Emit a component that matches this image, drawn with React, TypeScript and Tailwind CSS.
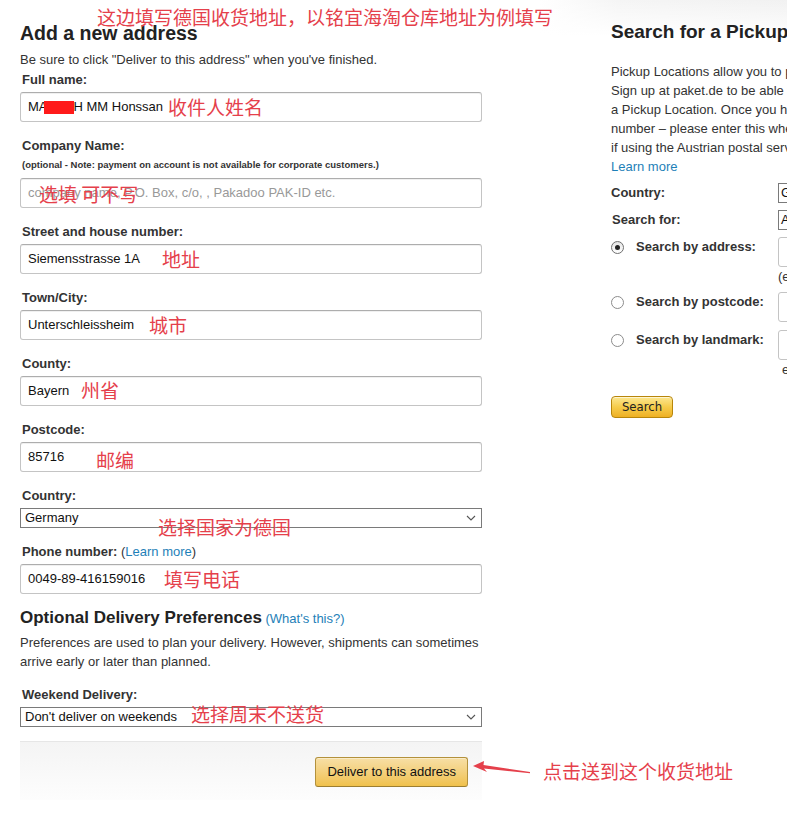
import React from "react";

const RED = "text-[#e5404b]";

function Annot({ text, className }: { text: string; className: string }) {
  return (
    <span
      className={`absolute whitespace-nowrap leading-[19px] text-[19px] font-['Noto_Sans_CJK_SC',sans-serif] ${RED} ${className}`}
    >
      {text}
    </span>
  );
}

function Label({ children }: { children: React.ReactNode }) {
  return (
    <div className="h-[19px] leading-[19px] text-[13px] font-bold text-[#333] pl-[2px]">{children}</div>
  );
}

function InputBox({ children, className = "" }: { children?: React.ReactNode; className?: string }) {
  return (
    <div
      className={`relative h-[30px] border border-[#c4c4c4] border-t-[#adadad] rounded-[3px] shadow-[inset_0_1px_0_rgba(0,0,0,0.06)] bg-white flex items-center pl-[7px] text-[13px] text-[#111] whitespace-nowrap ${className}`}
    >
      {children}
    </div>
  );
}

function Chevron() {
  return (
    <svg width="10" height="6" viewBox="0 0 10 6" className="shrink-0">
      <polyline points="1,1 5,5 9,1" fill="none" stroke="#555" strokeWidth="1.1" />
    </svg>
  );
}

function SelectBox({ value, children }: { value: string; children?: React.ReactNode }) {
  return (
    <div className="relative h-[20px] border border-[#7a7a7a] bg-white flex items-center justify-between pl-[4px] pr-[5px] text-[13px] text-[#111]">
      <span>{value}</span>
      <Chevron />
      {children}
    </div>
  );
}

function Radio({ checked }: { checked?: boolean }) {
  return (
    <div
      className={`w-[13px] h-[13px] rounded-full border flex items-center justify-center ${
        checked ? "border-[#6f6f6f] bg-linear-to-b from-[#e4e4e4] to-white" : "border-[#8c8c8c] bg-white"
      }`}
    >
      {checked && <div className="w-[5px] h-[5px] rounded-full bg-[#222]" />}
    </div>
  );
}

export default function App() {
  return (
    <div className="relative w-[787px] h-[819px] overflow-hidden bg-white flex font-['Liberation_Sans',Arial,sans-serif] text-[#333]">
      {/* soft top shading behind the right column */}
      <div className="absolute left-[540px] top-0 w-[260px] h-[36px] bg-linear-to-r from-white to-[#f1f1f1] via-[#f5f5f5] via-[30%]" />
      <div className="absolute left-[540px] top-0 w-[260px] h-[36px] bg-linear-to-b from-transparent to-white" />

      {/* Left column */}
      <div className="relative w-[482px] shrink-0 pl-[20px] pt-[22px]">
        <h2 className="text-[19.5px] leading-[22px] font-bold text-[#222]">Add a new address</h2>
        <div className="mt-[6px] text-[13px] leading-[19px] text-[#333]">
          Be sure to click "Deliver to this address" when you've finished.
        </div>

        <div className="mt-[1px]">
          <Label>Full name:</Label>
          <InputBox className="mt-[3px]">
            <span>MA</span>
            <span className="inline-block w-[30px] h-[13px] bg-[#ff1a1a] -ml-[4px]" />
            <span>H MM Honssan</span>
            <Annot text="收件人姓名" className="left-[147px] top-[4px]" />
          </InputBox>
        </div>

        <div className="mt-[14px]">
          <Label>Company Name:</Label>
          <div className="h-[20px] leading-[20px] text-[9.5px] font-bold text-[#333] pl-[2px] whitespace-nowrap">
            (optional - Note: payment on account is not available for corporate customers.)
          </div>
          <InputBox className="mt-[3px]">
            <span className="text-[#999]">company name, P.O. Box, c/o, , Pakadoo PAK-ID etc.</span>
            <Annot text="选填 可不写" className="left-[18px] top-[5px] text-[18px]" />
          </InputBox>
        </div>

        <div className="mt-[14px]">
          <Label>Street and house number:</Label>
          <InputBox className="mt-[3px]">
            <span>Siemensstrasse 1A</span>
            <Annot text="地址" className="left-[141px] top-[4px]" />
          </InputBox>
        </div>

        <div className="mt-[14px]">
          <Label>Town/City:</Label>
          <InputBox className="mt-[3px]">
            <span>Unterschleissheim</span>
            <Annot text="城市" className="left-[128px] top-[4px]" />
          </InputBox>
        </div>

        <div className="mt-[14px]">
          <Label>County:</Label>
          <InputBox className="mt-[3px]">
            <span>Bayern</span>
            <Annot text="州省" className="left-[60px] top-[3px]" />
          </InputBox>
        </div>

        <div className="mt-[14px]">
          <Label>Postcode:</Label>
          <InputBox className="mt-[3px]">
            <span>85716</span>
            <Annot text="邮编" className="left-[75px] top-[7px]" />
          </InputBox>
        </div>

        <div className="mt-[14px]">
          <Label>Country:</Label>
          <div className="mt-[3px]">
            <SelectBox value="Germany">
              <Annot text="选择国家为德国" className="left-[137px] top-[8px]" />
            </SelectBox>
          </div>
        </div>

        <div className="mt-[14px]">
          <Label>
            Phone number:{" "}
            <span className="font-normal">
              {" "}(<span className="text-[#1e7fb8]">Learn more</span>)
            </span>
          </Label>
          <InputBox className="mt-[3px]">
            <span>0049-89-416159016</span>
            <Annot text="填写电话" className="left-[143px] top-[4px]" />
          </InputBox>
        </div>

        <div className="mt-[12px] h-[24px] leading-[24px] whitespace-nowrap">
          <span className="text-[17px] font-bold text-[#222]">Optional Delivery Preferences</span>
          <span className="text-[13px] text-[#1e7fb8]"> (What's this?)</span>
        </div>
        <div className="mt-[3px] text-[13px] leading-[19px] text-[#333] whitespace-nowrap">
          Preferences are used to plan your delivery. However, shipments can sometimes
          <br />
          arrive early or later than planned.
        </div>

        <div className="mt-[14px]">
          <Label>Weekend Delivery:</Label>
          <div className="mt-[3px]">
            <SelectBox value="Don't deliver on weekends">
              <Annot text="选择周末不送货" className="left-[170px] top-[-4px]" />
            </SelectBox>
          </div>
        </div>

        <div className="mt-[14px] border-t border-[#e6e6e6] bg-linear-to-b from-[#f4f4f4] to-[#fdfdfd] pt-[15px] pb-[13px] pr-[14px] flex justify-end">
          <button className="h-[30px] px-[11px] rounded-[3px] border border-[#b3913c] border-b-[#9c7e31] bg-linear-to-b from-[#f7dfa5] to-[#f0c14b] text-[13px] text-[#111] shadow-[inset_0_1px_0_rgba(255,255,255,0.4)]">
            Deliver to this address
          </button>
        </div>
      </div>

      {/* Right column */}
      <div className="relative w-[420px] shrink-0 ml-[96px] pl-[33px] pt-[21px]">
        <h2 className="text-[19px] leading-[22px] font-bold text-[#222] whitespace-nowrap">
          Search for a Pickup Location
        </h2>
        <div className="mt-[19px] text-[13px] leading-[19px] text-[#333] whitespace-nowrap">
          <div>Pickup Locations allow you to pick up your parcel at a Packstation or post office.</div>
          <div>Sign up at paket.de to be able to receive your parcels at</div>
          <div>a Pickup Location. Once you have signed up you will receive a customer</div>
          <div>number – please enter this when selecting a Pickup Location (not required</div>
          <div>if using the Austrian postal service).</div>
          <div className="text-[#1e7fb8]">Learn more</div>
        </div>

        <div className="mt-[7px] flex items-center h-[20px]">
          <div className="w-[167px] text-[13px] font-bold text-[#333]">Country:</div>
          <div className="w-[200px] h-[20px] border border-[#7a7a7a] pl-[2px] text-[13px] leading-[18px] text-[#111]">
            Germany
          </div>
        </div>
        <div className="mt-[7px] flex items-center h-[20px]">
          <div className="w-[167px] pl-[1px] text-[13px] font-bold text-[#333]">Search for:</div>
          <div className="w-[200px] h-[20px] border border-[#7a7a7a] pl-[2px] text-[13px] leading-[18px] text-[#111]">
            All Pickup Locations
          </div>
        </div>

        <div className="mt-[7px] flex items-start">
          <div className="w-[25px] pt-[4px]">
            <Radio checked />
          </div>
          <div className="w-[142px] leading-[19px] text-[13px] font-bold text-[#333]">Search by address:</div>
          <div className="w-[200px] h-[30px] border border-[#c4c4c4] rounded-[3px]" />
        </div>
        <div className="pl-[167px] leading-[19px] text-[13px] text-[#333] whitespace-nowrap">(e.g. street, town)</div>

        <div className="mt-[6px] flex items-start">
          <div className="w-[25px] pt-[4px]">
            <Radio />
          </div>
          <div className="w-[142px] leading-[19px] text-[13px] font-bold text-[#333]">Search by postcode:</div>
          <div className="w-[200px] h-[30px] border border-[#c4c4c4] rounded-[3px]" />
        </div>

        <div className="mt-[8px] flex items-start">
          <div className="w-[25px] pt-[4px]">
            <Radio />
          </div>
          <div className="w-[142px] leading-[19px] text-[13px] font-bold text-[#333]">Search by landmark:</div>
          <div className="w-[200px] h-[30px] border border-[#c4c4c4] rounded-[3px]" />
        </div>
        <div className="pl-[171px] leading-[19px] text-[13px] text-[#333] whitespace-nowrap">e.g. Marienplatz</div>

        <div className="mt-[15px]">
          <button className="w-[62px] h-[22px] rounded-[4px] border border-[#b8860b] bg-linear-to-b from-[#fce78e] via-[#f6cc4a] to-[#eeb022] text-[13px] leading-[20px] text-[#222] font-['Liberation_Sans_Narrow','DejaVu_Sans_Condensed',sans-serif] shadow-[inset_0_1px_0_rgba(255,255,255,0.6)]">
            Search
          </button>
        </div>
      </div>

      {/* Overlay annotations */}
      <Annot
        text="这边填写德国收货地址，以铭宜海淘仓库地址为例填写"
        className="left-[97px] top-[7px]"
      />
      <svg className="absolute left-[468px] top-[755px]" width="66" height="24" viewBox="0 0 66 24">
        <path d="M5 11 L16 6 L15.5 10 L62 17 L62 18.3 L16 13.5 L19 17 Z" fill="#e5404b" />
      </svg>
      <Annot text="点击送到这个收货地址" className="left-[543px] top-[761px]" />
    </div>
  );
}
